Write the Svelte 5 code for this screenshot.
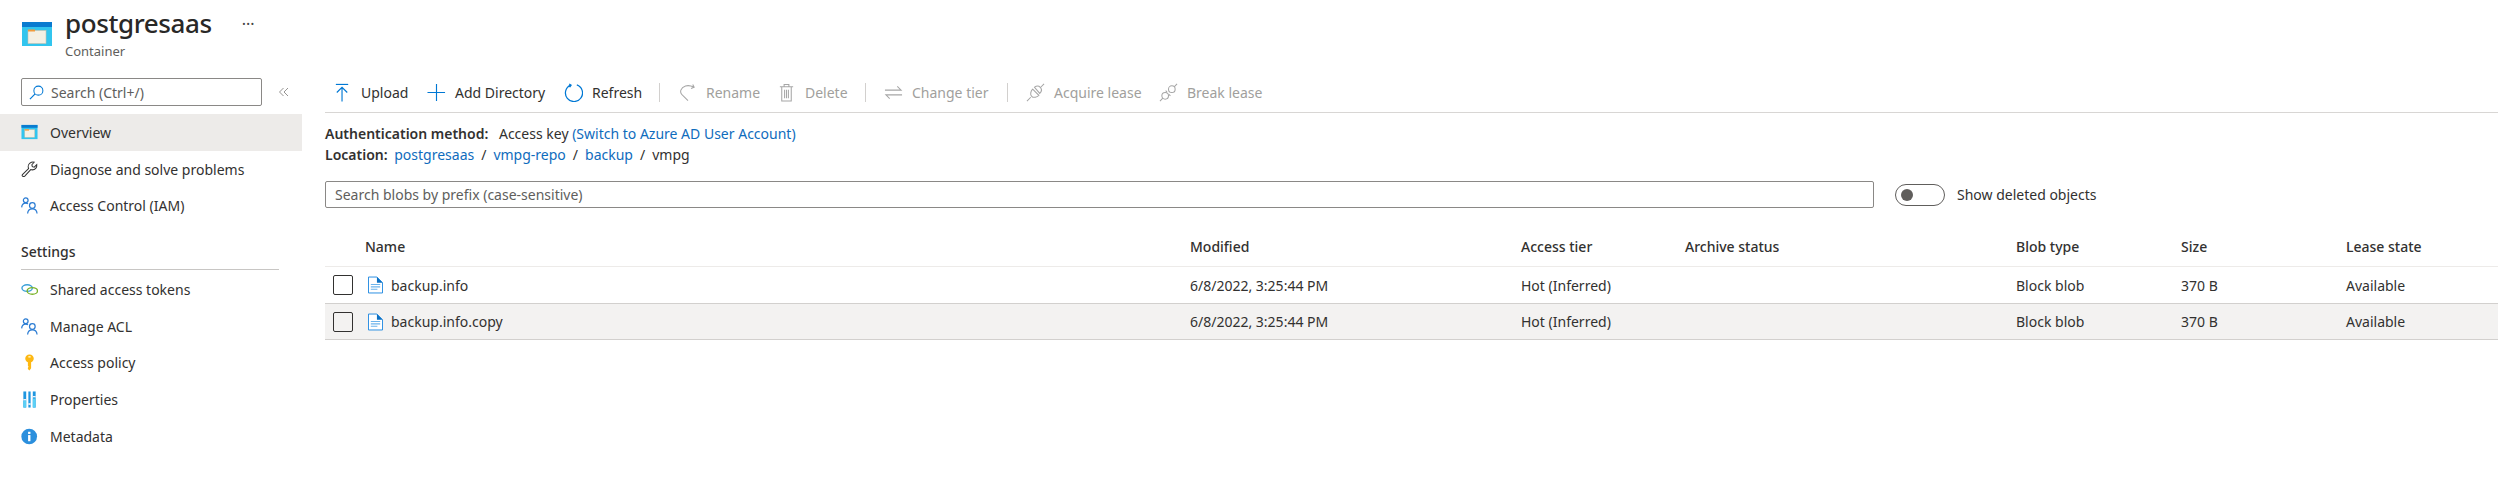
<script>
  const nav1 = [
    { label: 'Overview', icon: 'box', active: true },
    { label: 'Diagnose and solve problems', icon: 'wrench' },
    { label: 'Access Control (IAM)', icon: 'people' }
  ];
  const nav2 = [
    { label: 'Shared access tokens', icon: 'link' },
    { label: 'Manage ACL', icon: 'people' },
    { label: 'Access policy', icon: 'key' },
    { label: 'Properties', icon: 'props' },
    { label: 'Metadata', icon: 'info' }
  ];
  const tools = [
    { label: 'Upload', icon: 'upload', w: 94 },
    { label: 'Add Directory', icon: 'plus', w: 137 },
    { label: 'Refresh', icon: 'refresh', w: 103 },
    { sep: true, w: 11 },
    { label: 'Rename', icon: 'rename', off: true, w: 99 },
    { label: 'Delete', icon: 'trash', off: true, w: 96 },
    { sep: true, w: 11 },
    { label: 'Change tier', icon: 'swap', off: true, w: 131 },
    { sep: true, w: 11 },
    { label: 'Acquire lease', icon: 'plug', off: true, w: 133 },
    { label: 'Break lease', icon: 'unplug', off: true, w: 200 }
  ];
  const columns = ['Name', 'Modified', 'Access tier', 'Archive status', 'Blob type', 'Size', 'Lease state'];
  const rows = ['backup.info', 'backup.info.copy'];
</script>

{#snippet navIcon(name)}
  <svg class="nav-icon" viewBox="0 0 18 18" aria-hidden="true">
    {#if name === 'box'}
      <rect x="0.5" y="1" width="17" height="15" fill="#32c5ee" />
      <rect x="0.5" y="1" width="17" height="3" fill="#0a7bd0" />
      <rect x="4" y="6" width="10.5" height="8" fill="#f4f0e4" stroke="#c8c1ad" stroke-width="0.5" />
      <rect x="4" y="5.5" width="4.5" height="1.5" fill="#f29b3c" />
    {:else if name === 'wrench'}
      <path d="M1.5 14.5 8 8C7 5.5 8 2.5 11 1.3c1.200-.4 2.300-.3 3-.1L11.500 4l.5 2 2 .5 2.700-2.600c.4 3-1.700 5.500-4.700 5.500-.6 0-1.200-.1-1.700-.3L4 16c-1.300 1.200-3.600-.2-2.500-1.500z" fill="none" stroke="#333" stroke-width="1.100" />
    {:else if name === 'people'}
      <g fill="none" stroke="#2b7cd3" stroke-width="1.300">
        <circle cx="5" cy="3.500" r="2.500" />
        <path d="M.7 11c.2-3 2-4.500 4.300-4.500 1 0 1.800.3 2.400.8" />
        <circle cx="12" cy="9" r="3" />
        <path d="M7 17.500c.2-3 2.300-5 5-5s4.800 2 5 5" />
      </g>
    {:else if name === 'link'}
      <g fill="none" stroke-width="1.500">
        <ellipse cx="6.500" cy="7.500" rx="5.500" ry="3.500" stroke="#3aa0d8" />
        <ellipse cx="12" cy="10.500" rx="5.500" ry="3.500" stroke="#7ab32a" />
      </g>
    {:else if name === 'key'}
      <path d="M9 .5c2.700 0 4.500 2 4.500 4.300 0 2-1.200 3.300-2.800 3.900V15L9 17.500 7.300 16v-1.500L8 13.500l-.7-1V8.700C5.700 8.100 4.500 6.800 4.500 4.800 4.500 2.500 6.300.5 9 .5z" fill="#fdb813" />
      <rect x="7.800" y="2.200" width="2.400" height="1.600" fill="#fff3c4" />
    {:else if name === 'props'}
      <rect x="2.500" y="0.500" width="3" height="17" fill="#1e96e0" />
      <rect x="7.800" y="0.500" width="2.400" height="17" fill="#1e96e0" />
      <rect x="12.500" y="0.500" width="3" height="17" fill="#1e96e0" />
      <rect x="2.500" y="10" width="3" height="7.500" fill="#5bd0f5" />
      <rect x="7.800" y="13" width="2.400" height="1.600" fill="#fff" />
      <rect x="12.500" y="8" width="3" height="9.500" fill="#5bd0f5" />
      <rect x="2.500" y="8.600" width="3" height="1.300" fill="#fff" />
      <rect x="12.500" y="5.400" width="3" height="1.300" fill="#fff" />
    {:else if name === 'info'}
      <circle cx="8.700" cy="9" r="8.300" fill="#2b8fdd" />
      <rect x="7.500" y="7.500" width="2.500" height="6.500" fill="#fff" />
      <rect x="7.500" y="4" width="2.500" height="2.300" fill="#fff" />
    {/if}
  </svg>
{/snippet}

{#snippet toolIcon(name)}
  <svg class="tool-icon" viewBox="0 0 20 20" aria-hidden="true">
    {#if name === 'upload'}
      <g fill="none" stroke="#0078d4" stroke-width="1.200">
        <path d="M3 1.500h13" />
        <path d="M9.500 4.500v15M4 10l5.500-5.500L15 10" />
      </g>
    {:else if name === 'plus'}
      <path d="M0.500 10h18.500M10 1v18" fill="none" stroke="#0078d4" stroke-width="1.200" />
    {:else if name === 'refresh'}
      <path d="M7 2.200a9 9 0 1 0 6.500-.2M5.500 1l2 1.300L6 4.500" fill="none" stroke="#0078d4" stroke-width="1.300" />
    {:else if name === 'rename'}
      <path d="M15.500 1.500l1.500 3-3.300 1.200M16.500 4.300C10 1 4.500 3.500 3 7.500c-.8 2.500.5 4.500 2.500 6l5 5" fill="none" stroke="#a6a6a6" stroke-width="1.100" />
    {:else if name === 'trash'}
      <g fill="none" stroke="#a6a6a6" stroke-width="1.100">
        <path d="M3 4h14M7.500 4V1.500h5V4M5 4v15h10V4" />
        <path d="M8 7v9M10 7v9M12 7v9" />
      </g>
    {:else if name === 'swap'}
      <path d="M1 7.500h17l-4-4M19 12.500H2l4 4" fill="none" stroke="#a6a6a6" stroke-width="1.100" />
    {:else if name === 'plug'}
      <g fill="none" stroke="#a6a6a6" stroke-width="1.100">
        <path d="M1 19l4-4M15 5l4-4" />
        <path d="M7 6.500l6.500 6.500c-2 2-5.500 3-7.500 1-2-1.500-1-5.500 1-7.500zM9 4.500c2-1.500 4.500-1.500 6 0s2 4-.5 6.500z" />
      </g>
    {:else if name === 'unplug'}
      <g fill="none" stroke="#a6a6a6" stroke-width="1.100">
        <path d="M1 19l3-3M16 4l3-3" />
        <circle cx="6.500" cy="13.500" r="3.500" />
        <circle cx="13.500" cy="6.500" r="3.500" />
        <path d="M7 8l1.500 1.500M10.500 12L12 13.500" />
      </g>
    {/if}
  </svg>
{/snippet}

<div class="page">
  <header class="head">
    <svg class="logo" viewBox="0 0 30 24" aria-hidden="true">
      <rect width="30" height="24" fill="#32c5ee" />
      <rect width="30" height="5" fill="#0a7bd0" />
      <rect x="6" y="8.500" width="18" height="13" fill="#f4f0e4" stroke="#c8c1ad" stroke-width="0.600" />
      <rect x="6" y="7.500" width="7" height="2" fill="#f29b3c" />
    </svg>
    <div class="titles">
      <h1>postgresaas</h1>
      <div class="sub">Container</div>
    </div>
    <span class="more">···</span>
  </header>

  <div class="body">
    <aside class="side">
      <div class="side-search">
        <div class="search-box">
          <svg class="mag" viewBox="0 0 16 16" aria-hidden="true">
            <circle cx="10" cy="6" r="4.800" fill="none" stroke="#0078d4" stroke-width="1.100" />
            <path d="M6.500 9.500L1 15" fill="none" stroke="#0078d4" stroke-width="1.300" />
          </svg>
          <span>Search (Ctrl+/)</span>
        </div>
        <svg class="collapse" viewBox="0 0 10 10" aria-hidden="true">
          <path d="M4.500 1L.5 5l4 4M9 1L5 5l4 4" fill="none" stroke="#8a8886" stroke-width="0.900" />
        </svg>
      </div>
      <nav>
        {#each nav1 as item}
          <div class="nav-row" class:active={item.active}>
            {@render navIcon(item.icon)}
            <span>{item.label}</span>
          </div>
        {/each}
        <div class="section">Settings</div>
        {#each nav2 as item}
          <div class="nav-row">
            {@render navIcon(item.icon)}
            <span>{item.label}</span>
          </div>
        {/each}
      </nav>
    </aside>

    <main class="main">
      <div class="toolbar">
        {#each tools as t}
          {#if t.sep}
            <div class="sep-cell" style="width:{t.w}px"><span class="sep"></span></div>
          {:else}
            <div class="tool" class:off={t.off} style="width:{t.w}px">
              {@render toolIcon(t.icon)}
              <span>{t.label}</span>
            </div>
          {/if}
        {/each}
      </div>

      <div class="info">
        <div><b>Authentication method:</b> <span class="gap">Access key</span> <span class="link">(Switch to Azure AD User Account)</span></div>
        <div><b>Location:</b> <span class="loc link">postgresaas</span><i>/</i><span class="link">vmpg-repo</span><i>/</i><span class="link">backup</span><i>/</i><span>vmpg</span></div>
      </div>

      <div class="filter">
        <div class="blob-search">Search blobs by prefix (case-sensitive)</div>
        <div class="toggle"><span class="knob"></span></div>
        <span class="toggle-label">Show deleted objects</span>
      </div>

      <div class="table">
        <div class="tr th">
          <span class="check-cell"></span>
          {#each columns as c}<span>{c}</span>{/each}
        </div>
        {#each rows as r, i}
          <div class="tr" class:shade={i === 1}>
            <span class="check-cell"><span class="check"></span></span>
            <span class="name">
              <svg class="file" viewBox="0 0 16 18" aria-hidden="true">
                <path d="M.5.500h9l6 6v11H.5z" fill="#fff" stroke="#1e88e0" />
                <path d="M9.500.500l6 6h-6z" fill="#0a6fc2" />
                <path d="M3 8.500h10M3 11h10M3 13.500h7" stroke="#6cb4ec" stroke-width="1.200" />
              </svg>
              {r}
            </span>
            <span>6/8/2022, 3:25:44 PM</span>
            <span>Hot (Inferred)</span>
            <span></span>
            <span>Block blob</span>
            <span>370 B</span>
            <span>Available</span>
          </div>
        {/each}
      </div>
    </main>
  </div>
</div>

<style>
  :global(body) {
    margin: 0;
    background: #fff;
  }
  .page {
    width: 2498px;
    height: 489px;
    overflow: hidden;
    font-family: "Noto Sans", "Open Sans", sans-serif;
    font-size: 14px;
    color: #323130;
    background: #fff;
  }
  .head {
    height: 73px;
    display: flex;
    position: relative;
    padding-left: 22px;
  }
  .logo {
    width: 30px;
    height: 24px;
    margin-top: 22px;
  }
  .titles {
    margin-left: 13px;
    margin-top: 5px;
  }
  h1 {
    margin: 0;
    font-size: 26px;
    line-height: 36px;
    font-weight: 500;
    letter-spacing: -0.4px;
    color: #292827;
  }
  .sub {
    font-size: 13px;
    line-height: 17px;
    margin-top: 2px;
    color: #605e5c;
  }
  .more {
    margin-left: 30px;
    margin-top: 14px;
    font-size: 16px;
    line-height: 20px;
    color: #444;
  }
  .body {
    display: flex;
  }
  .side {
    width: 302px;
    flex: none;
  }
  .side-search {
    display: flex;
    align-items: center;
    padding: 5px 0 0 21px;
    height: 28px;
  }
  .search-box {
    width: 239px;
    height: 26px;
    border: 1px solid #8a8886;
    border-radius: 2px;
    display: flex;
    align-items: center;
    color: #605e5c;
  }
  .mag {
    width: 15px;
    height: 15px;
    margin: 0 7px;
  }
  .collapse {
    width: 10px;
    height: 10px;
    margin-left: 17px;
  }
  nav {
    margin-top: 8px;
  }
  .nav-row {
    height: 36.700px;
    display: flex;
    align-items: center;
    padding-left: 21px;
    gap: 12px;
  }
  .nav-row.active {
    background: #edebe9;
  }
  .nav-icon {
    width: 17px;
    height: 17px;
    flex: none;
  }
  .section {
    width: 258px;
    margin: 10px 0 1px 21px;
    line-height: 24px;
    font-weight: 500;
    border-bottom: 1px solid #c8c6c4;
    box-sizing: border-box;
    height: 36px;
    padding-top: 6px;
  }
  .main {
    flex: 1;
    min-width: 0;
    margin-left: 23px;
  }
  .toolbar {
    display: flex;
    align-items: center;
    height: 39px;
    border-bottom: 1px solid #d8d6d4;
  }
  .tool {
    display: flex;
    align-items: center;
    gap: 9px;
    flex: none;
    padding-left: 8px;
    box-sizing: border-box;
    white-space: nowrap;
    color: #323130;
  }
  .tool.off {
    color: #a19f9d;
  }
  .tool-icon {
    width: 19px;
    height: 19px;
    flex: none;
  }
  .sep-cell {
    flex: none;
    display: flex;
  }
  .sep {
    width: 1px;
    height: 19px;
    background: #d2d0ce;
  }
  .info {
    margin-top: 11px;
    line-height: 20.500px;
  }
  .info b {
    font-weight: 600;
  }
  .info i {
    font-style: normal;
    margin: 0 7px;
  }
  .gap {
    margin-left: 7px;
  }
  .loc {
    margin-left: 3px;
  }
  .link {
    color: #0f6cbd;
  }
  .filter {
    display: flex;
    align-items: center;
    margin-top: 16px;
  }
  .blob-search {
    width: 1549px;
    height: 27px;
    box-sizing: border-box;
    border: 1px solid #8a8886;
    border-radius: 2px;
    line-height: 25px;
    padding-left: 9px;
    color: #605e5c;
  }
  .toggle {
    margin-left: 21px;
    width: 50px;
    height: 22px;
    box-sizing: border-box;
    border: 1px solid #605e5c;
    border-radius: 11px;
    display: flex;
    align-items: center;
    padding-left: 5px;
  }
  .knob {
    width: 12px;
    height: 12px;
    border-radius: 50%;
    background: #605e5c;
  }
  .toggle-label {
    margin-left: 12px;
  }
  .table {
    margin-top: 21px;
  }
  .tr {
    display: grid;
    grid-template-columns: 40px 825px 331px 164px 331px 165px 165px 1fr;
    align-items: center;
    height: 37px;
    box-sizing: border-box;
    border-bottom: 1px solid #d2d0ce;
  }
  .th {
    height: 38px;
    font-weight: 500;
    padding-bottom: 2px;
    border-bottom: 1px solid #edebe9;
  }
  .shade {
    background: #f3f2f1;
    height: 36px;
  }
  .check-cell {
    display: flex;
    padding-left: 8px;
  }
  .check {
    width: 20px;
    height: 20px;
    box-sizing: border-box;
    border: 1px solid #323130;
    border-radius: 2px;
  }
  .name {
    display: flex;
    align-items: center;
    gap: 8px;
    padding-left: 3px;
  }
  .file {
    width: 15px;
    height: 18px;
    flex: none;
  }
</style>
